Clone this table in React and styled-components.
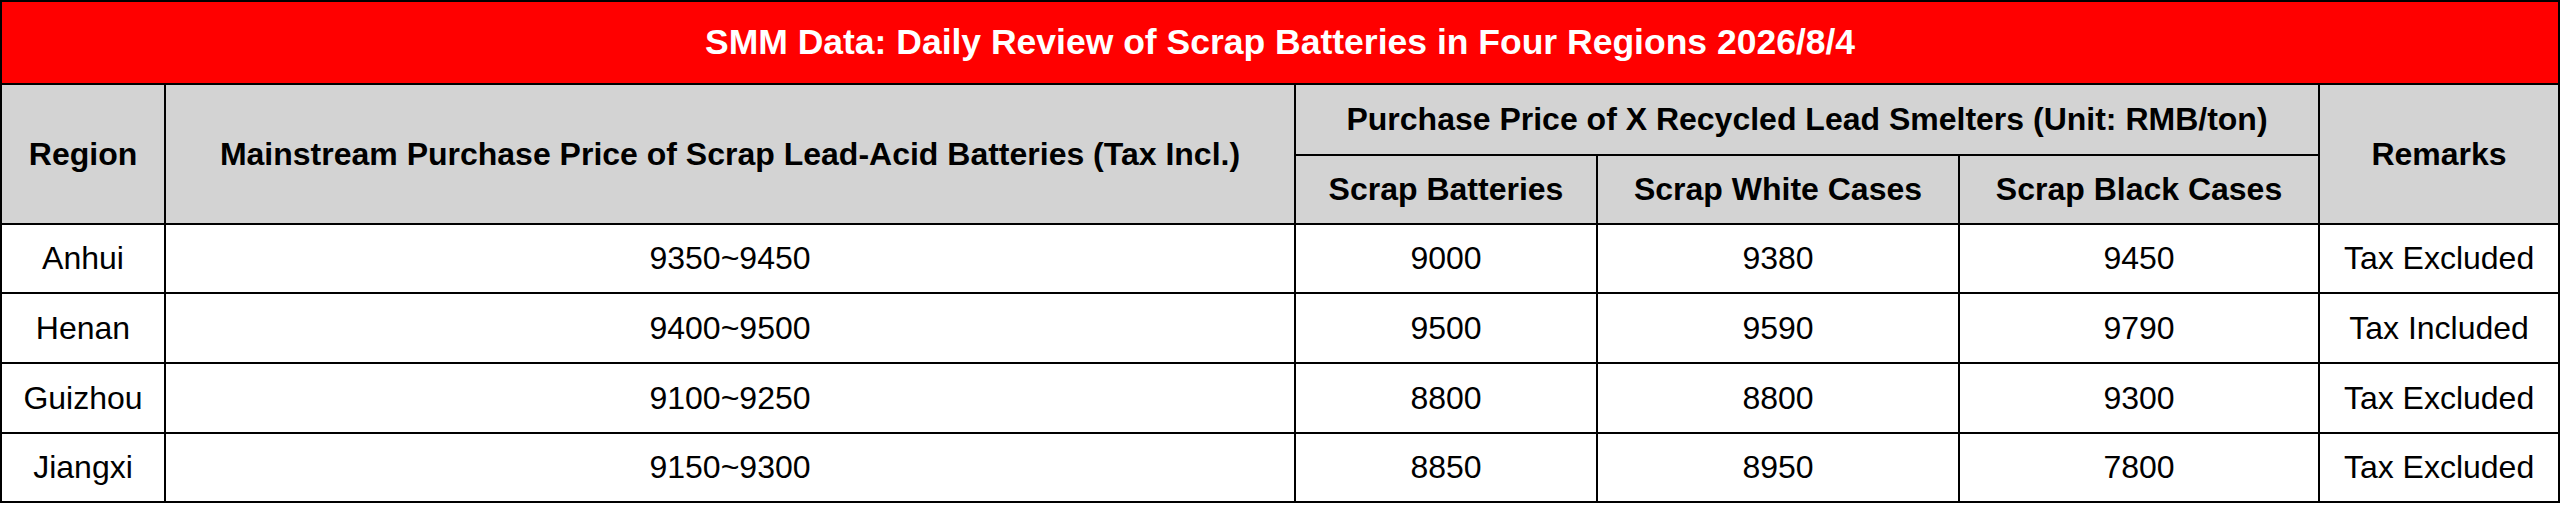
import React from 'react';
import styled, { createGlobalStyle } from 'styled-components';

const GlobalStyle = createGlobalStyle`
  body {
    margin: 0;
    background: #fff;
    font-family: "Liberation Sans", Arial, sans-serif;
  }
`;

const Table = styled.table`
  width: 2560px;
  table-layout: fixed;
  border-collapse: collapse;
  font-family: "Liberation Sans", Arial, sans-serif;
  color: #000;
`;

const Row = styled.tr`
  height: ${(p) => p.$h}px;
`;

const TitleCell = styled.th`
  background: #ff0000;
  color: #fff;
  font-size: 35.5px;
  font-weight: bold;
  text-align: center;
  border: 2px solid #000;
  padding: 0;
`;

const HeadCell = styled.th`
  background: #d3d3d3;
  font-size: 32px;
  font-weight: bold;
  text-align: center;
  border: 2px solid #000;
  padding: 0;
`;

const Cell = styled.td`
  font-size: 32px;
  text-align: center;
  border: 2px solid #000;
  padding: 0;
`;

const widths = [164, 1130, 302, 362, 360, 240];

const rows = [
  ['Anhui', '9350~9450', '9000', '9380', '9450', 'Tax Excluded'],
  ['Henan', '9400~9500', '9500', '9590', '9790', 'Tax Included'],
  ['Guizhou', '9100~9250', '8800', '8800', '9300', 'Tax Excluded'],
  ['Jiangxi', '9150~9300', '8850', '8950', '7800', 'Tax Excluded'],
];

const rowHeights = [69, 70, 70, 69];

export default function App() {
  return (
    <>
      <GlobalStyle />
      <Table>
        <colgroup>
          {widths.map((w, i) => (
            <col key={i} style={{ width: w }} />
          ))}
        </colgroup>
        <thead>
          <Row $h={83}>
            <TitleCell colSpan={6}>
              SMM Data: Daily Review of Scrap Batteries in Four Regions 2026/8/4
            </TitleCell>
          </Row>
          <Row $h={71}>
            <HeadCell rowSpan={2}>Region</HeadCell>
            <HeadCell rowSpan={2}>
              Mainstream Purchase Price of Scrap Lead-Acid Batteries (Tax Incl.)
            </HeadCell>
            <HeadCell colSpan={3}>
              Purchase Price of X Recycled Lead Smelters (Unit: RMB/ton)
            </HeadCell>
            <HeadCell rowSpan={2}>Remarks</HeadCell>
          </Row>
          <Row $h={69}>
            <HeadCell>Scrap Batteries</HeadCell>
            <HeadCell>Scrap White Cases</HeadCell>
            <HeadCell>Scrap Black Cases</HeadCell>
          </Row>
        </thead>
        <tbody>
          {rows.map((r, i) => (
            <Row key={r[0]} $h={rowHeights[i]}>
              {r.map((v, j) => (
                <Cell key={j}>{v}</Cell>
              ))}
            </Row>
          ))}
        </tbody>
      </Table>
    </>
  );
}
